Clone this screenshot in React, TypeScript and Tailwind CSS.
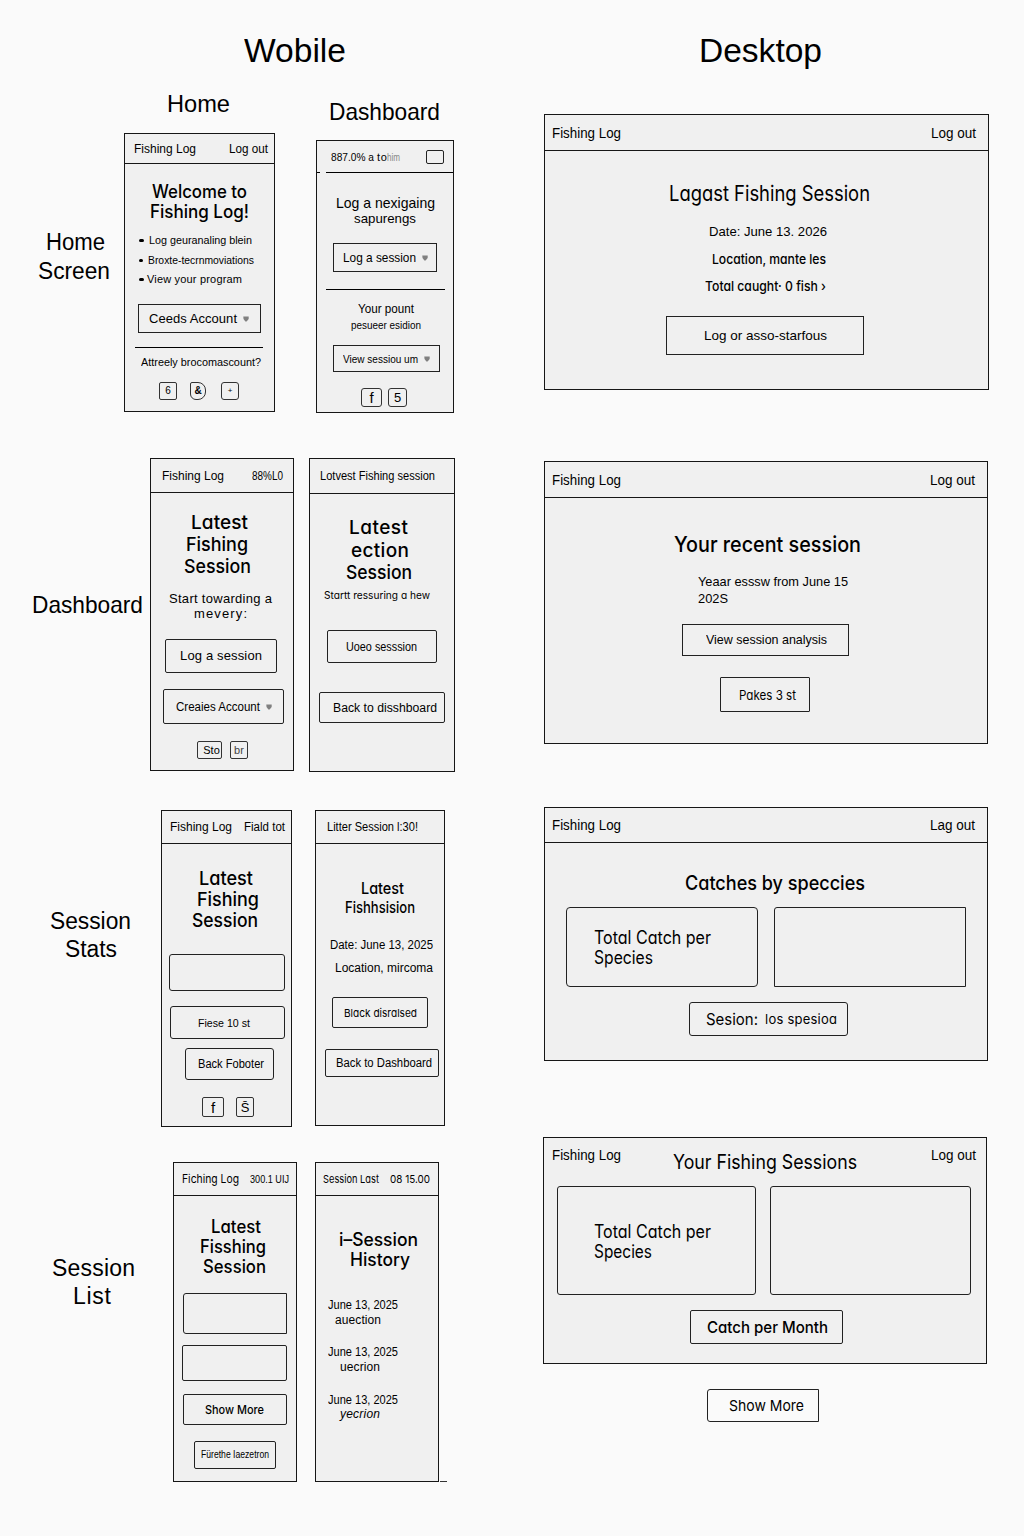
import React, { useLayoutEffect, useRef } from "react";

/** One line of text that fills the width of its box exactly. */
function Line({ children, className = "" }: { children: string; className?: string }) {
  const box = useRef<HTMLDivElement>(null);
  const ink = useRef<HTMLSpanElement>(null);
  useLayoutEffect(() => {
    const b = box.current;
    const s = ink.current;
    if (!b || !s) return;
    s.style.letterSpacing = "0px";
    s.style.transform = "none";
    const want = b.getBoundingClientRect().width;
    const have = s.getBoundingClientRect().width;
    if (have > want) s.style.transform = `scaleX(${want / have})`;
    else s.style.letterSpacing = `${(want - have) / Math.max(1, children.length - 1)}px`;
  }, [children]);
  return (
    <div ref={box} className={`shrink-0 whitespace-nowrap ${className}`}>
      <span ref={ink} className="inline-block origin-left whitespace-pre align-top">
        {children}
      </span>
    </div>
  );
}

type BoxProps = { className?: string; children?: React.ReactNode };

function Panel({ className = "", children }: BoxProps) {
  return (
    <section className={`flex shrink-0 flex-col items-start border border-[#161616] bg-[#f0f0f0] ${className}`}>
      {children}
    </section>
  );
}

function Bar({ className = "", children }: BoxProps) {
  return (
    <header className={`flex w-full shrink-0 items-center border-b border-[#161616] ${className}`}>{children}</header>
  );
}

function Button({ className = "", children }: BoxProps) {
  return (
    <button className={`flex shrink-0 items-center border border-[#222] text-left ${className}`}>{children}</button>
  );
}

function Frame({ className = "", children }: BoxProps) {
  return <div className={`shrink-0 border border-[#222] ${className}`}>{children}</div>;
}

function Chip({ className = "", children }: BoxProps) {
  return (
    <span className={`flex shrink-0 items-center justify-center border border-[#333] leading-none ${className}`}>
      {children}
    </span>
  );
}

function Caret() {
  return (
    <svg viewBox="0 0 6 6" className="ml-1.5 size-1.5 shrink-0" aria-hidden="true">
      <path d="M0.3 0.6 H5.7 V3 L3.6 5.6 H2.4 L0.5 3 Z" fill="#808080" />
    </svg>
  );
}

const head = "font-[Inter] font-medium [font-feature-settings:'cv11'] ";
const hand = "font-[Inter] [font-feature-settings:'cv11'] ";

function DesktopBar({ className, out = "Log out" }: { className: string; out?: string }) {
  return (
    <Bar className={`justify-between pr-3 pl-[7px] ${className}`}>
      <Line className="w-[69px] text-[14px] leading-5">Fishing Log</Line>
      <Line className="w-[45px] text-[14px] leading-5">{out}</Line>
    </Bar>
  );
}

function MobileHomeRow() {
  return (
    <div className="flex h-[368px] items-start">
      <div className="w-[124px] shrink-0 text-[23px] leading-7">
        <Line className="mt-[146px] ml-[46px] w-[59px]">Home</Line>
        <Line className="mt-px ml-[38px] w-[72px]">Screen</Line>
      </div>

      <div className="w-[151px] shrink-0">
        <Line className="mt-2 ml-[43px] w-[63px] text-[24px] leading-7">Home</Line>
        <Panel className="mt-[15px] h-[279px] w-[151px]">
          <Bar className="h-[30px] justify-between pr-[6px] pl-[9px]">
            <Line className="w-[62px] text-[12px] leading-5">Fishing Log</Line>
            <Line className="w-[39px] text-[12px] leading-5">Log out</Line>
          </Bar>
          <Line className={head + "mt-[18px] ml-[27px] w-[95px] text-[18px] leading-5"}>Welcome to</Line>
          <Line className={head + "ml-[25px] w-[99px] text-[18px] leading-5"}>Fishing Log!</Line>
          <div className="mt-[9px] ml-[14px] flex items-center">
            <i className="h-[3px] w-[5px] rounded-full bg-black" />
            <Line className="ml-[5px] w-[103px] text-[11px] leading-[18px]">Log geuranaling blein</Line>
          </div>
          <div className="mt-[2px] ml-[14px] flex items-center">
            <i className="h-[3px] w-1 rounded-full bg-black" />
            <Line className="ml-[5px] w-[106px] text-[11px] leading-[18px]">Broxte-tecrnmoviations</Line>
          </div>
          <div className="mt-px ml-[14px] flex items-center">
            <i className="h-[3px] w-[5px] rounded-full bg-black" />
            <Line className="ml-[3px] w-[95px] text-[11px] leading-[18px]">View your program</Line>
          </div>
          <Button className="mt-4 ml-[13px] h-[29px] w-[123px] pl-[10px]">
            <Line className="w-[88px] text-[13px] leading-5">Ceeds Account</Line>
            <Caret />
          </Button>
          <div className="mt-[14px] ml-[10px] h-px w-32 bg-black" />
          <Line className="mt-1 ml-4 w-[120px] text-[11.5px] leading-5">Attreely brocomascount?</Line>
          <div className="mt-[10px] ml-[34px] flex text-[10px]">
            <Chip className="h-[18px] w-[18px] rounded-[2px]">6</Chip>
            <Chip className="ml-[13px] h-[18px] w-4 rounded-tl-[2px] rounded-tr-[8px] rounded-br-[8px] rounded-bl-[6px] font-bold">
              &amp;
            </Chip>
            <Chip className="ml-[15px] h-[18px] w-[18px] rounded-[3px] text-[8px]">+</Chip>
          </div>
        </Panel>
      </div>

      <div className="ml-[41px] w-[138px] shrink-0">
        <Line className="mt-4 ml-[13px] w-[111px] text-[24px] leading-7">Dashboard</Line>
        <Panel className="mt-[14px] h-[273px] w-[138px]">
          <div className="flex h-[31px] w-full items-center pl-[14px]">
            <Line className="w-[43px] text-[11px] leading-5">887.0% a</Line>
            <Line className="ml-[3px] w-[10px] text-[11px] leading-5">to</Line>
            <Line className="w-[13px] text-[11px] leading-5 text-[#888]">him</Line>
            <Frame className="ml-[26px] h-[14px] w-[18px] rounded-[2px]" />
          </div>
          <div className="flex w-full">
            <i className="h-px w-[3px] bg-black" />
            <i className="ml-[6px] h-px grow bg-black" />
          </div>
          <Line className="mt-[22px] ml-[19px] w-[99px] text-[14.5px] leading-4">Log a nexigaing</Line>
          <Line className="ml-[37px] w-[62px] text-[13.5px] leading-4">sapurengs</Line>
          <Button className="mt-4 ml-4 h-[29px] w-[104px] pl-[9px]">
            <Line className="w-[73px] text-[13px] leading-5">Log a session</Line>
            <Caret />
          </Button>
          <div className="mt-[17px] ml-[9px] h-px w-[119px] bg-black" />
          <Line className="mt-[11px] ml-[41px] w-14 text-[12px] leading-4">Your pount</Line>
          <Line className="ml-[34px] w-[70px] text-[10.5px] leading-4">pesueer esidion</Line>
          <Button className="mt-3 ml-4 h-[27px] w-[107px] pl-[9px]">
            <Line className="w-[75px] text-[11.5px] leading-5">View sessiou um</Line>
            <Caret />
          </Button>
          <div className="mt-4 ml-11 flex gap-[6px] text-[13px]">
            <Chip className="h-[19px] w-[21px] rounded-[3px] text-[15px]">f</Chip>
            <Chip className="h-[19px] w-[19px] rounded-[3px]">5</Chip>
          </div>
        </Panel>
      </div>
    </div>
  );
}

function MobileDashboardRow() {
  return (
    <div className="flex h-[350px] items-start">
      <div className="w-[150px] shrink-0">
        <Line className="mt-[141px] ml-8 w-[111px] text-[24px] leading-7">Dashboard</Line>
      </div>
      <Panel className="mt-2 h-[313px] w-36">
        <Bar className="h-[34px] justify-between pr-[10px] pl-[11px]">
          <Line className="w-[62px] text-[12.5px] leading-5">Fishing Log</Line>
          <Line className="w-[31px] text-[12px] leading-5">88%L0</Line>
        </Bar>
        <Line className={head + "mt-[19px] ml-10 w-[57px] text-[19px] leading-[22px]"}>Latest</Line>
        <Line className={head + "ml-[35px] w-[62px] text-[19px] leading-[22px]"}>Fishing</Line>
        <Line className={head + "ml-[33px] w-[67px] text-[19px] leading-[22px]"}>Session</Line>
        <Line className="mt-[13px] ml-[18px] w-[103px] text-[13px] leading-[15px]">Start towarding a</Line>
        <Line className="ml-[43px] w-[53px] text-[13px] leading-[15px]">mevery:</Line>
        <Button className="mt-[18px] ml-[14px] h-[34px] w-28 rounded-[2px] pl-[14px]">
          <Line className="w-[82px] text-[13px] leading-5">Log a session</Line>
        </Button>
        <Button className="mt-4 ml-3 h-[35px] w-[121px] rounded-[2px] pl-3">
          <Line className="w-[84px] text-[12.5px] leading-5">Creaies Account</Line>
          <Caret />
        </Button>
        <div className="mt-[17px] ml-[46px] flex gap-2 text-[11px]">
          <Chip className="h-[18px] w-[25px] rounded-[2px] pl-1">Sto</Chip>
          <Chip className="h-[18px] w-[18px] rounded-[2px] text-[#444]">br</Chip>
        </div>
      </Panel>
      <Panel className="mt-2 ml-[15px] h-[314px] w-[146px]">
        <Bar className="h-[35px] pl-[10px]">
          <Line className="w-[115px] text-[12px] leading-5">Lotvest Fishing session</Line>
        </Bar>
        <Line className={head + "mt-[23px] ml-[39px] w-[59px] text-[19px] leading-[22px]"}>Latest</Line>
        <Line className={head + "mt-px ml-[41px] w-[58px] text-[19px] leading-[22px]"}>ection</Line>
        <Line className={head + "ml-9 w-[66px] text-[19px] leading-[22px]"}>Session</Line>
        <Line className={hand + "mt-1 ml-[14px] w-[106px] text-[10.5px] leading-4"}>Startt ressuring a hew</Line>
        <Button className="mt-[26px] ml-[17px] h-[33px] w-[110px] rounded-[2px] pl-[18px]">
          <Line className="w-[71px] text-[12px] leading-5">Uoeo sesssion</Line>
        </Button>
        <Button className="mt-[29px] ml-[9px] h-[31px] w-[126px] rounded-[2px] pl-[13px]">
          <Line className="w-[104px] text-[12.5px] leading-5">Back to disshboard</Line>
        </Button>
      </Panel>
    </div>
  );
}

function MobileStatsRow() {
  return (
    <div className="flex h-[350px] items-start">
      <div className="w-[161px] shrink-0 text-[23px] leading-7">
        <Line className="mt-[107px] ml-[50px] w-[81px]">Session</Line>
        <Line className="ml-[65px] w-[52px]">Stats</Line>
      </div>
      <Panel className="mt-[10px] h-[317px] w-[131px]">
        <Bar className="h-[33px] justify-between pr-[6px] pl-2">
          <Line className="w-[62px] text-[12.5px] leading-5">Fishing Log</Line>
          <Line className="w-[41px] text-[12px] leading-5">Fiald tot</Line>
        </Bar>
        <Line className={head + "mt-6 ml-[37px] w-[54px] text-[18.5px] leading-[21px]"}>Latest</Line>
        <Line className={head + "ml-[35px] w-[62px] text-[18.5px] leading-[21px]"}>Fishing</Line>
        <Line className={head + "ml-[30px] w-[66px] text-[18.5px] leading-[21px]"}>Session</Line>
        <Frame className="mt-[23px] ml-[7px] h-[37px] w-[116px] rounded-[3px]" />
        <Button className="mt-[15px] ml-2 h-[33px] w-[115px] rounded-[3px] pl-[27px]">
          <Line className="w-[52px] text-[11px] leading-5">Fiese 10 st</Line>
        </Button>
        <Button className="mt-[9px] ml-[23px] h-8 w-[89px] rounded-[3px] pl-3">
          <Line className="w-[66px] text-[12px] leading-5">Back Foboter</Line>
        </Button>
        <div className="mt-[17px] ml-10 flex gap-3">
          <Chip className="h-5 w-[22px] rounded-[2px] text-[15px]">f</Chip>
          <Chip className="h-5 w-[18px] rounded-[2px] text-[13px]">S̄</Chip>
        </div>
      </Panel>
      <Panel className="mt-[10px] ml-[23px] h-[316px] w-[130px]">
        <Bar className="h-[33px] pl-[11px]">
          <Line className="w-[91px] text-[12px] leading-5">Litter Session l:30!</Line>
        </Bar>
        <Line className={head + "mt-[35px] ml-[45px] w-[43px] text-[16px] leading-[19px]"}>Latest</Line>
        <Line className={head + "ml-[29px] w-[70px] text-[16px] leading-[19px]"}>Fishhsision</Line>
        <Line className="mt-[18px] ml-[14px] w-[103px] text-[12.5px] leading-5">Date: June 13, 2025</Line>
        <Line className="mt-[3px] ml-[19px] w-[98px] text-[12px] leading-5">Location, mircoma</Line>
        <Button className="mt-[19px] ml-4 h-[31px] w-24 rounded-[2px] pl-[11px]">
          <Line className={hand + "w-[73px] text-[11px] leading-5"}>Black disralsed</Line>
        </Button>
        <Button className="mt-[21px] ml-[9px] h-7 w-[114px] rounded-[2px] pl-[10px]">
          <Line className="w-24 text-[12px] leading-5">Back to Dashboard</Line>
        </Button>
      </Panel>
    </div>
  );
}

function MobileListRow() {
  return (
    <div className="flex h-[386px] items-start">
      <div className="w-[173px] shrink-0 text-[23px] leading-7">
        <Line className="mt-[104px] ml-[52px] w-[83px]">Session</Line>
        <Line className="ml-[73px] w-[38px]">List</Line>
      </div>
      <Panel className="mt-3 h-80 w-[124px]">
        <Bar className="h-[33px] justify-between pr-[7px] pl-2">
          <Line className={hand + "w-[57px] text-[11.5px] leading-5"}>Fiching Log</Line>
          <Line className="w-[39px] text-[11px] leading-5">300.1 UIJ</Line>
        </Bar>
        <Line className={head + "mt-[21px] ml-[37px] w-[50px] text-[18px] leading-5"}>Latest</Line>
        <Line className={head + "ml-[26px] w-[66px] text-[18px] leading-5"}>Fisshing</Line>
        <Line className={head + "ml-[29px] w-[63px] text-[18px] leading-5"}>Session</Line>
        <Frame className="mt-4 ml-[9px] h-[41px] w-[104px] rounded-l-[3px]" />
        <Frame className="mt-[11px] ml-2 h-9 w-[105px] rounded-[2px]" />
        <Button className="mt-[13px] ml-[9px] h-[31px] w-[104px] rounded-[2px] pl-[21px]">
          <Line className={head + "w-[59px] text-[12px] leading-5"}>Show More</Line>
        </Button>
        <Button className="mt-4 ml-5 h-7 w-[82px] rounded-[2px] pl-[6px]">
          <Line className="w-[68px] text-[10px] leading-5">Fürethe Iaezetron</Line>
        </Button>
      </Panel>
      <Panel className="mt-3 ml-[18px] h-80 w-[124px]">
        <Bar className="h-[33px] justify-between pr-2 pl-[7px]">
          <Line className={hand + "w-14 text-[11px] leading-5"}>Session Last</Line>
          <Line className={hand + "w-10 text-[11px] leading-5"}>08 15.00</Line>
        </Bar>
        <Line className={head + "mt-[34px] ml-[23px] w-[79px] text-[18px] leading-5"}>i–Session</Line>
        <Line className={head + "ml-[34px] w-[60px] text-[18px] leading-5"}>History</Line>
        <Line className="mt-7 ml-3 w-[70px] text-[12px] leading-[14px]">June 13, 2025</Line>
        <Line className="mt-px ml-[19px] w-[46px] text-[12px] leading-[14px]">auection</Line>
        <Line className="mt-[18px] ml-3 w-[70px] text-[12px] leading-[14px]">June 13, 2025</Line>
        <Line className="mt-px ml-6 w-10 text-[12px] leading-[14px]">uecrion</Line>
        <Line className="mt-[19px] ml-3 w-[70px] text-[12px] leading-[14px]">June 13, 2025</Line>
        <Line className="ml-6 w-10 text-[12px] leading-[14px] italic">yecrion</Line>
      </Panel>
      <i className="mt-[331px] ml-px h-px w-[7px] bg-[#333]" />
    </div>
  );
}

function DesktopColumn() {
  return (
    <div className="w-[512px] shrink-0">
      <h1 className="flex h-[82px] pt-[30px] text-[34px] leading-10">
        <Line className="ml-[187px] w-[123px]">Desktop</Line>
      </h1>

      <Panel className="mt-8 ml-8 h-[276px] w-[445px]">
        <DesktopBar className="h-9" />
        <Line className={hand + "mt-[31px] ml-[124px] w-[201px] text-[21px] leading-6"}>Lagast Fishing Session</Line>
        <Line className="mt-4 ml-[164px] w-[118px] text-[13.5px] leading-5">Date: June 13. 2026</Line>
        <Line className={head + "mt-[7px] ml-[167px] w-[114px] text-[13.5px] leading-5"}>Location, mante les</Line>
        <Line className={head + "mt-[7px] ml-40 w-[121px] text-[13.5px] leading-5"}>Total caught· 0 fish ›</Line>
        <Button className="mt-5 ml-[121px] h-[39px] w-[198px] pl-[37px]">
          <Line className="w-[123px] text-[13.5px] leading-5">Log or asso-starfous</Line>
        </Button>
      </Panel>

      <Panel className="mt-[71px] ml-8 h-[283px] w-[444px]">
        <DesktopBar className="h-9" />
        <Line className={head + "mt-[34px] ml-[129px] w-[187px] text-[21.5px] leading-6"}>Your recent session</Line>
        <Line className="mt-[17px] ml-[153px] w-[150px] text-[13.5px] leading-[17px]">Yeaar esssw from June 15</Line>
        <Line className="ml-[153px] w-[30px] text-[13.5px] leading-[17px]">202S</Line>
        <Button className="mt-[17px] ml-[137px] h-8 w-[167px] pl-[23px]">
          <Line className="w-[121px] text-[13px] leading-5">View session analysis</Line>
        </Button>
        <Button className="mt-[21px] ml-[175px] h-[35px] w-[90px] rounded-[1px] pl-[18px]">
          <Line className={hand + "w-[57px] text-[13px] leading-5"}>Pakes 3 st</Line>
        </Button>
      </Panel>

      <Panel className="mt-[63px] ml-8 h-[254px] w-[444px]">
        <DesktopBar className="h-[35px]" out="Lag out" />
        <Line className={head + "mt-[28px] ml-[140px] w-[180px] text-[20px] leading-6"}>Catches by speccies</Line>
        <div className="mt-3 ml-[21px] flex gap-4">
          <Frame className="h-20 w-48 rounded-[4px] pt-5 pl-[27px]">
            <Line className={hand + "w-[117px] text-[18px] leading-5"}>Total Catch per</Line>
            <Line className={hand + "w-[59px] text-[18px] leading-5"}>Species</Line>
          </Frame>
          <Frame className="h-20 w-48 rounded-tl-[3px]" />
        </div>
        <Button className="mt-[15px] ml-36 h-[34px] w-[159px] rounded-[3px] pl-4">
          <Line className={hand + "w-[52px] text-[16px] leading-5"}>Sesion:</Line>
          <Line className={hand + "ml-[7px] w-[72px] text-[13px] leading-5"}>los spesioa</Line>
        </Button>
      </Panel>

      <Panel className="mt-[76px] ml-[31px] h-[227px] w-[444px]">
        <div className="flex h-12 shrink-0">
          <Line className="mt-[7px] ml-2 w-[69px] text-[14px] leading-5">Fishing Log</Line>
          <Line className={hand + "mt-3 ml-[52px] w-[184px] text-[20px] leading-6"}>Your Fishing Sessions</Line>
          <Line className="mt-[7px] ml-[74px] w-[45px] text-[14px] leading-5">Log out</Line>
        </div>
        <div className="ml-[13px] flex gap-[14px]">
          <Frame className="h-[109px] w-[199px] rounded-[3px] pt-[34px] pl-9">
            <Line className={hand + "w-[117px] text-[18px] leading-[21px]"}>Total Catch per</Line>
            <Line className={hand + "w-[58px] text-[18px] leading-5"}>Species</Line>
          </Frame>
          <Frame className="h-[109px] w-[201px] rounded-[3px]" />
        </div>
        <Button className="mt-[15px] ml-[146px] h-[34px] w-[153px] rounded-[2px] pl-4">
          <Line className={head + "w-[121px] text-[16px] leading-5"}>Catch per Month</Line>
        </Button>
      </Panel>

      <Button className="mt-[25px] ml-[195px] h-[33px] w-[112px] rounded-l-[3px] pl-[21px]">
        <Line className={hand + "w-[75px] text-[15px] leading-5"}>Show More</Line>
      </Button>
    </div>
  );
}

export default function App() {
  return (
    <main className="flex h-[1536px] w-[1024px] overflow-hidden bg-[#fafafa] font-['Liberation_Sans',Arial,sans-serif] text-black">
      <div className="w-[512px] shrink-0">
        <h1 className="flex h-[82px] pt-[30px] text-[34px] leading-10">
          <Line className="ml-[244px] w-[102px]">Wobile</Line>
        </h1>
        <MobileHomeRow />
        <MobileDashboardRow />
        <MobileStatsRow />
        <MobileListRow />
      </div>
      <DesktopColumn />
    </main>
  );
}
